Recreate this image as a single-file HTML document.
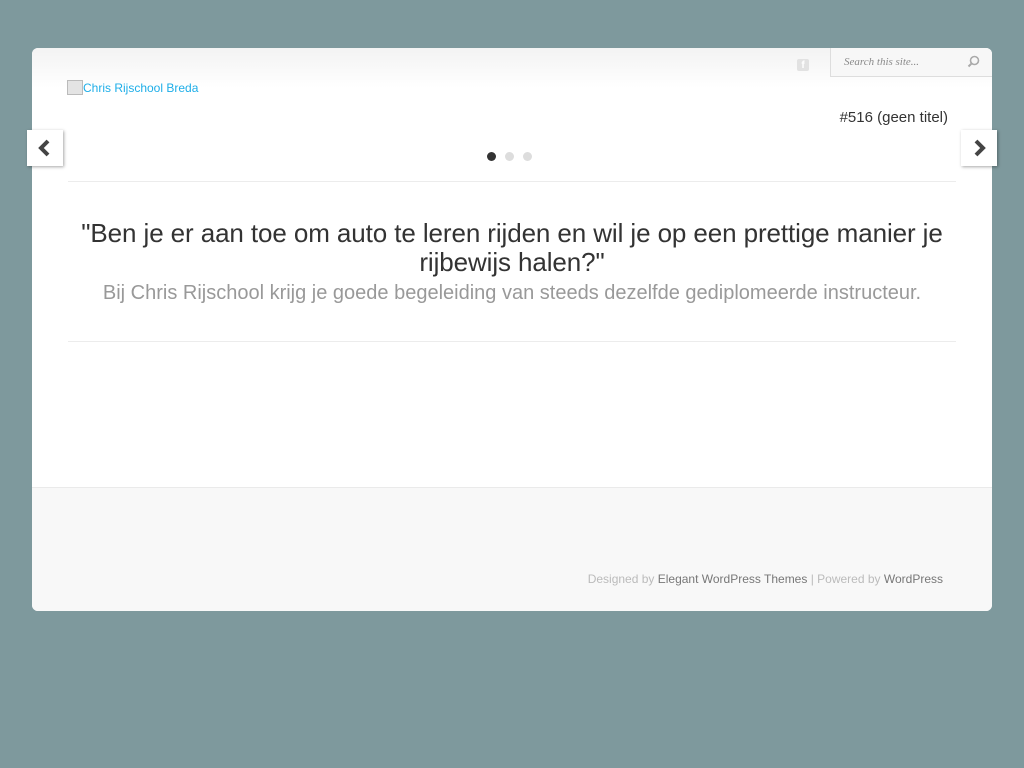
<!DOCTYPE html>
<html><head><meta charset="utf-8"><style>
body{margin:0;width:1024px;height:768px;background:#7e999d;font-family:"Liberation Sans",sans-serif;position:relative;overflow:hidden}
#c{position:absolute;left:32px;top:48px;width:960px;height:563px;background:#fff;border-radius:6px;overflow:hidden}
#top{position:absolute;left:0;top:0;width:960px;height:40px;background:linear-gradient(#f3f3f3,#fff)}
#search{position:absolute;left:798px;top:0;width:162px;height:28px;background:#f7f7f7;border-left:1px solid #ddd;border-bottom:1px solid #ddd;font-family:"Liberation Serif",serif;font-style:italic;font-size:11px;color:#8a8a8a}
#foot{position:absolute;left:0;top:439px;width:960px;height:124px;background:#f8f8f8;border-top:1px solid #eaeaea}
.arr{position:absolute;top:130px;width:36px;height:36px;background:#fff;box-shadow:1px 1px 3px rgba(0,0,0,.35)}
.arr svg{position:absolute;left:0;top:0}
.dot{position:absolute;top:152px;width:9px;height:9px;border-radius:50%;background:#ddd}
.hr{position:absolute;left:36px;width:888px;height:1px;background:#ececec}
</style></head><body>
<div id="c">
<div id="top"></div>
<div style="position:absolute;left:765px;top:11px;width:12px;height:12px;background:#e2e2e2;border-radius:2px;color:#fff;font-size:10px;text-align:center;line-height:13px;font-weight:bold">f</div>
<div id="search"><span style="position:absolute;left:13px;top:8px">Search this site...</span>
<svg style="position:absolute;left:136px;top:7px" width="13" height="13" viewBox="0 0 13 13"><circle cx="7.5" cy="5.5" r="4" fill="none" stroke="#aaa" stroke-width="1.6"/><path d="M4.6 8.4L1.5 11.5" stroke="#aaa" stroke-width="2"/></svg></div>
<div style="position:absolute;left:35px;top:32px;font-size:12px;color:#1eaee8"><span style="display:inline-block;width:16px;height:15px;background:#e4e4e4;vertical-align:-3px;border:1px solid #bbb;box-sizing:border-box"></span>Chris Rijschool Breda</div>
<div style="position:absolute;right:44px;top:61px;font-size:15px;color:#333">#516 (geen titel)</div>
<div class="hr" style="top:133px"></div>
<div style="position:absolute;left:0;width:960px;top:171px;text-align:center;font-size:26px;color:#333;line-height:29px;letter-spacing:-0.1px">"Ben je er aan toe om auto te leren rijden en wil je op een prettige manier je<br>rijbewijs halen?"</div>
<div style="position:absolute;left:0;width:960px;top:234px;text-align:center;font-size:20px;color:#999">Bij Chris Rijschool krijg je goede begeleiding van steeds dezelfde gediplomeerde instructeur.</div>
<div class="hr" style="top:293px"></div>
<div id="foot"><div style="position:absolute;right:49px;top:84px;font-size:12px;color:#bbb">Designed by <span style="color:#777">Elegant WordPress Themes</span> | Powered by <span style="color:#777">WordPress</span></div></div>
</div>
<div class="dot" style="left:487px;background:#333"></div>
<div class="dot" style="left:505px"></div>
<div class="dot" style="left:523px"></div>
<div class="arr" style="left:27px"><svg width="36" height="36"><path d="M21 11L14 18L21 25" fill="none" stroke="#444" stroke-width="4"/></svg></div>
<div class="arr" style="left:961px"><svg width="36" height="36"><path d="M15 11L22 18L15 25" fill="none" stroke="#444" stroke-width="4"/></svg></div>
</body></html>
